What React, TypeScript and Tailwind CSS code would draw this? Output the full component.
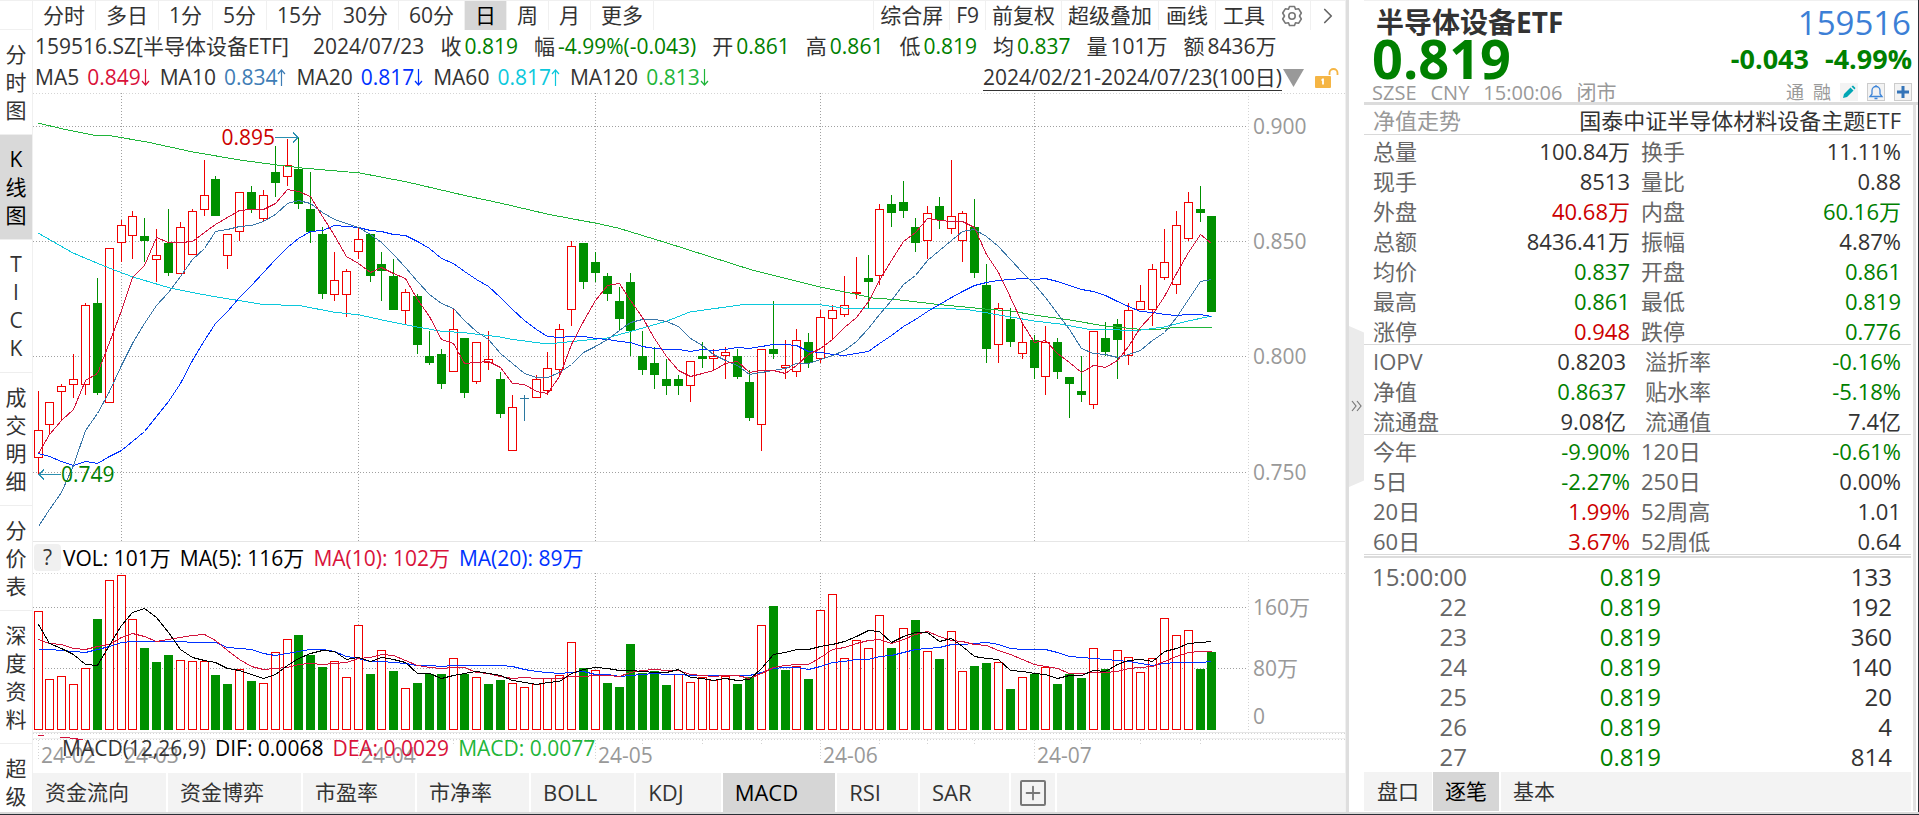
import { ChevronRight, Plus } from "lucide-react";

// one entry per day: direction, body top, body bottom, high, low (chart units)
type Candle = [string, number, number, number, number];

const CANDLES: Candle[] = [
  ["r", 430, 457, 391, 474], ["r", 402, 424, 402, 434], ["r", 386, 391, 384, 420], ["r", 379, 384, 354, 398],
  ["r", 305, 384, 303, 395], ["g", 303, 393, 278, 395], ["r", 248, 402, 248, 402], ["r", 225, 242, 220, 262],
  ["r", 216, 235, 211, 259], ["g", 236, 241, 218, 262], ["r", 255, 259, 229, 282], ["g", 243, 273, 209, 276],
  ["r", 227, 273, 222, 273], ["r", 211, 254, 209, 254], ["r", 195, 209, 160, 216], ["g", 179, 216, 176, 216],
  ["r", 234, 255, 234, 269], ["r", 192, 231, 192, 241], ["g", 192, 209, 186, 213], ["r", 195, 218, 190, 221],
  ["g", 172, 183, 146, 197], ["r", 165, 176, 139, 186], ["g", 169, 204, 137, 209], ["g", 209, 232, 172, 243],
  ["g", 234, 294, 227, 299], ["r", 280, 294, 252, 301], ["r", 271, 294, 269, 317], ["r", 239, 251, 227, 259],
  ["g", 234, 276, 234, 282], ["g", 264, 271, 252, 301], ["g", 276, 310, 259, 310], ["r", 292, 310, 289, 324],
  ["g", 296, 345, 294, 354], ["g", 356, 363, 331, 365], ["g", 354, 384, 349, 389], ["r", 329, 371, 308, 371],
  ["g", 338, 393, 338, 398], ["r", 342, 381, 342, 384], ["r", 359, 362, 331, 370], ["g", 379, 414, 372, 418],
  ["r", 407, 450, 395, 450], ["x", 398, 398, 395, 421], ["r", 379, 397, 375, 398], ["r", 368, 390, 352, 395],
  ["r", 329, 369, 324, 377], ["r", 246, 309, 241, 326], ["g", 243, 282, 243, 289], ["g", 262, 273, 252, 282],
  ["g", 276, 294, 273, 301], ["g", 301, 319, 287, 330], ["g", 282, 331, 273, 356], ["g", 356, 370, 331, 375],
  ["g", 363, 375, 347, 389], ["g", 379, 386, 359, 395], ["g", 379, 386, 375, 395], ["r", 361, 385, 361, 402],
  ["g", 356, 359, 342, 368], ["r", 356, 358, 349, 371], ["r", 352, 355, 347, 379], ["g", 356, 377, 349, 379],
  ["g", 382, 418, 370, 421], ["r", 349, 424, 349, 451], ["g", 349, 354, 301, 359], ["r", 365, 367, 340, 379],
  ["r", 340, 371, 329, 377], ["g", 342, 363, 333, 368], ["r", 317, 358, 310, 363], ["r", 310, 318, 305, 340],
  ["r", 305, 314, 276, 317], ["r", 292, 293, 257, 299], ["g", 278, 282, 255, 309], ["r", 209, 275, 204, 285],
  ["g", 204, 213, 195, 227], ["g", 202, 211, 181, 218], ["g", 227, 243, 218, 252], ["r", 213, 240, 206, 259],
  ["g", 206, 220, 197, 229], ["r", 216, 228, 160, 234], ["r", 213, 240, 211, 262], ["g", 227, 273, 199, 278],
  ["g", 285, 349, 264, 363], ["r", 308, 344, 303, 363], ["g", 319, 342, 308, 347], ["r", 342, 353, 323, 359],
  ["g", 340, 368, 335, 379], ["r", 342, 376, 326, 395], ["g", 342, 372, 338, 379], ["g", 377, 384, 377, 418],
  ["g", 391, 395, 356, 402], ["r", 331, 404, 331, 409], ["g", 338, 352, 322, 356], ["g", 324, 340, 319, 379],
  ["r", 310, 355, 303, 365], ["r", 301, 309, 285, 310], ["r", 269, 309, 264, 326], ["r", 262, 277, 229, 280],
  ["r", 225, 284, 211, 294], ["r", 202, 238, 192, 241], ["g", 209, 213, 186, 222], ["g", 216, 312, 216, 312],
];

const VOLUMES = [
  611, 679, 676, 684, 668, 619, 580, 575, 619, 648, 662, 655, 660, 661, 661, 675, 684, 669, 681, 683,
  652, 639, 635, 655, 667, 661, 677, 625, 674, 650, 671, 688, 683, 674, 674, 658, 674, 677, 684, 680,
  683, 687, 684, 678, 675, 642, 668, 670, 683, 687, 644, 673, 671, 685, 674, 682, 677, 680, 676, 684,
  677, 625, 606, 670, 666, 679, 610, 594, 658, 640, 648, 615, 648, 628, 620, 651, 659, 631, 671, 666,
  663, 662, 689, 677, 674, 667, 684, 674, 678, 648, 669, 650, 657, 672, 658, 618, 635, 630, 669, 652,
];

const VOLUME_DIRS =
  "rrrrrgrrrgggrrrggrgrrrgggrrrgrgrgggrgrgg" +
  "rrrrrrgrggggggrrrrrggrggrgrrrrrrgrgrgrrg" +
  "grgrgrgggrgrrrrrrrgg";

const MA60 =
  "38,233 73,253 109,268 133,277 170,288 200,294 217,297 260,304 302,306 333,312 360,315 382,320 417,327 440,331 467,333 500,337 510,339 547,344 567,342 607,338 643,328 667,321 690,312 740,305 757,304 815,304 850,309 875,308 941,308 970,310 1011,317 1034,321 1060,324 1087,329 1120,330 1141,330 1164,327 1188,321 1212,316";
const MA120 =
  "38,123 63,129 93,135 112,136 147,142 193,152 240,160 277,165 302,168 360,173 407,182 467,196 500,203 547,214 573,219 595,223 618,228 667,243 752,270 820,287 850,293 873,298 900,300 934,304 985,309 1011,311 1034,315 1070,320 1105,326 1137,329 1161,329 1180,327 1212,327";

const PLOT_LEFT = 33;
const PLOT_WIDTH = 1215;
const MONTHS = [
  { label: "24-02", x: 38 },
  { label: "24-03", x: 121 },
  { label: "24-04", x: 358 },
  { label: "24-05", x: 595 },
  { label: "24-06", x: 820 },
  { label: "24-07", x: 1034 },
];
const WEEKS = [4, 9, 14, 19, 24, 30, 35, 40, 51, 56, 61, 71, 75, 79, 88, 93, 98];

const xOf = (i: number) => 38 + Math.floor(11.858 * i);
const percent = (x: number) => `${((x - PLOT_LEFT) / PLOT_WIDTH) * 100}%`;

// moving average; head holds the points whose window starts before the first day
function average(values: number[], days: number, head: number[]) {
  return values
    .map((_, i) => {
      const y =
        i < head.length ? head[i] : values.slice(i - days + 1, i + 1).reduce((a, b) => a + b, 0) / days;
      return `${xOf(i) + 0.5},${Math.round(y) + 0.5}`;
    })
    .join(" ");
}

const CLOSES = CANDLES.map(([dir, top, bottom]) => (dir === "g" ? bottom : top));
const PRICE_LINES = [
  { color: "#1fb53a", points: MA120 },
  { color: "#0cc8dc", points: MA60 },
  {
    color: "#0032ff",
    points: average(CLOSES, 20, [453, 456, 461, 465, 461, 463, 456, 450, 441, 431, 416, 401, 383, 360, 340, 323, 311, 297, 285]),
  },
  { color: "#3a76a8", points: average(CLOSES, 10, [526, 509, 492, 465, 430, 413, 391, 365, 343]) },
  { color: "#d2143c", points: average(CLOSES, 5, [453, 434, 420, 409]) },
];
const VOLUME_LINES = [
  {
    color: "#0032ff",
    points: average(VOLUMES, 20, [649, 649, 650, 651, 652, 649, 646, 642, 641, 641, 641, 641, 641, 642, 642, 642, 647, 648, 649]),
  },
  { color: "#d2143c", points: average(VOLUMES, 10, [639, 643, 644, 648, 649, 646, 644, 637, 633]) },
  { color: "#000000", points: average(VOLUMES, 5, [624, 643, 648, 654]) },
];

function Line({ color, points }: { color: string; points: string }) {
  return <polyline points={points} fill="none" stroke={color} strokeWidth="1" />;
}

function Bar({ x, top, bottom, dir }: { x: number; top: number; bottom: number; dir: string }) {
  if (dir === "x") return <path d={`M${x - 4} ${top + 0.5}h9`} stroke="#2b78a0" />;
  if (dir === "g") return <rect x={x - 4} y={top} width="9" height={Math.max(bottom - top, 2)} fill="#009000" />;
  return (
    <rect x={x - 3.5} y={top + 0.5} width="8" height={Math.max(bottom - top, 1)} fill="#fff" stroke="#f00000" />
  );
}

function PriceChart() {
  return (
    <div className="flex h-[448px]">
      <div className="relative flex-1 min-w-0">
        <svg
          viewBox="33 93 1215 448"
          preserveAspectRatio="none"
          shapeRendering="crispEdges"
          className="block w-full h-full"
        >
          <path d="M33 93.5H1248" stroke="#d4d4d4" strokeDasharray="1 2" />
          {[126, 241, 356, 472].map((y) => (
            <path key={y} d={`M33 ${y + 0.5}H1248`} stroke="#a0a0a0" strokeDasharray="1 2" />
          ))}
          {MONTHS.slice(1).map((m) => (
            <path key={m.label} d={`M${m.x + 0.5} 93V541`} stroke="#a0a0a0" strokeDasharray="1 2" />
          ))}
          {CANDLES.map(([dir, top, bottom, high, low], i) => (
            <g key={i}>
              <path
                d={`M${xOf(i) + 0.5} ${high}V${low}`}
                stroke={dir === "g" ? "#009000" : dir === "r" ? "#f00000" : "#2b78a0"}
              />
              <Bar x={xOf(i)} top={top} bottom={bottom} dir={dir} />
            </g>
          ))}
          {PRICE_LINES.map((line) => (
            <Line key={line.color} {...line} />
          ))}
          <g fill="none" stroke="#2b8fb0">
            <path d="M275 137.5H298M293 132.5l5 5-5 5" />
            <path d="M61 474.5H39M44 469.5l-5 5 5 5" />
          </g>
        </svg>
        <span className="absolute top-[29px] leading-[30px] -translate-x-full text-[#cc0000]" style={{ left: percent(275) }}>
          0.895
        </span>
        <span className="absolute top-[366px] leading-[30px] text-[#008000]" style={{ left: percent(61) }}>
          0.749
        </span>
      </div>
      <svg width="97" height="448" viewBox="1248 93 97 448" className="shrink-0 text-[21px]">
        <path d="M1248 93.5H1345M1248.5 93V541" stroke="#d4d4d4" strokeDasharray="1 2" />
        <g fill="#999">
          <text x="1253" y="134">0.900</text>
          <text x="1253" y="249">0.850</text>
          <text x="1253" y="364">0.800</text>
          <text x="1253" y="480">0.750</text>
        </g>
      </svg>
    </div>
  );
}

function VolumeChart() {
  return (
    <div className="flex h-[160px]">
      <svg
        viewBox="33 573 1215 160"
        preserveAspectRatio="none"
        shapeRendering="crispEdges"
        className="block flex-1 min-w-0 h-full"
      >
        <path d="M33 573.5H1248" stroke="#d4d4d4" strokeDasharray="1 2" />
        <path d="M33 607.5H1248M33 668.5H1248" stroke="#a0a0a0" strokeDasharray="1 2" />
        {MONTHS.slice(1).map((m) => (
          <path key={m.label} d={`M${m.x + 0.5} 573V730`} stroke="#a0a0a0" strokeDasharray="1 2" />
        ))}
        {VOLUMES.map((top, i) => (
          <Bar key={i} x={xOf(i)} top={top} bottom={VOLUME_DIRS[i] === "g" ? 730 : 729} dir={VOLUME_DIRS[i]} />
        ))}
        {VOLUME_LINES.map((line) => (
          <Line key={line.color} {...line} />
        ))}
        <path d="M33 732.5H1248" stroke="#e6e6e6" />
      </svg>
      <svg width="97" height="160" viewBox="1248 573 97 160" className="shrink-0 text-[21px]">
        <path d="M1248 573.5H1345M1248.5 573V733" stroke="#d4d4d4" strokeDasharray="1 2" />
        <path d="M1248 732.5H1345" stroke="#e6e6e6" />
        <g fill="#999">
          <text x="1253" y="615">160万</text>
          <text x="1253" y="676">80万</text>
          <text x="1253" y="724">0</text>
        </g>
      </svg>
    </div>
  );
}

function DateAxis() {
  return (
    <div className="relative h-[40px] overflow-hidden">
      <div className="relative h-full mr-[97px]">
        <svg
          viewBox="33 733 1215 40"
          preserveAspectRatio="none"
          shapeRendering="crispEdges"
          className="block w-full h-full overflow-visible"
        >
          <path d="M33 733.5H1345M33 739.5H1345" stroke="#d4d4d4" strokeDasharray="1 2" />
          <path d="M33 738.5H1345" stroke="#f0f0f0" />
          <path d="M38 735.5h6M60 737.5h10M70 738.5h8M76 739.5h7" stroke="#d2143c" />
          {MONTHS.map((m) => (
            <path key={m.label} d={`M${m.x + 0.5} 740V759`} stroke="#d4d4d4" strokeDasharray="1 2" />
          ))}
          {WEEKS.map((i) => (
            <path key={i} d={`M${xOf(i) + 0.5} 740V745`} stroke="#d4d4d4" strokeDasharray="1 2" />
          ))}
        </svg>
        {MONTHS.map((m) => (
          <span key={m.label} className="absolute top-[7px] pl-[3px] leading-[30px] text-[#999]" style={{ left: percent(m.x) }}>
            {m.label}
          </span>
        ))}
      </div>
      <div className="absolute left-[29px] top-0 flex gap-[9px] leading-[30px] text-[#333]">
        <span>MACD(12,26,9)</span>
        <span className="text-black">DIF: 0.0068</span>
        <span className="text-[#d9123a]">DEA: 0.0029</span>
        <span className="text-[#1fb53a]">MACD: 0.0077</span>
      </div>
    </div>
  );
}

const SIDE_TABS = ["分时图", "K线图", "TICK", "成交明细", "分价表", "深度资料", "超级"];
const PERIODS = ["分时", "多日", "1分", "5分", "15分", "30分", "60分", "日", "周", "月", "更多"];
const INDICATORS = ["资金流向", "资金博弈", "市盈率", "市净率", "BOLL", "KDJ", "MACD", "RSI", "SAR"];

function SideTabs() {
  return (
    <nav className="w-[33px] shrink-0 border-r border-[#f0f0f0] h-[812px] overflow-hidden">
      <div className="h-[30px] border-y border-[#f0f0f0]" />
      {SIDE_TABS.map((tab) => (
        <button
          key={tab}
          className={
            "flex flex-col items-center w-full py-[10px] leading-[28px] border-b border-[#eee] " +
            (tab === "K线图" ? "bg-[#d9d9d9] text-black" : "")
          }
        >
          {tab.split("").map((char, i) => (
            <span key={i}>{char}</span>
          ))}
        </button>
      ))}
    </nav>
  );
}

function GearIcon() {
  return (
    <svg width="22" height="22" viewBox="0 0 22 22" fill="none" stroke="#777" strokeWidth="1.6" strokeLinejoin="round">
      <path d="M8.500 1.500h5l1 2.800 3.200-.5 2.600 4.200-1.800 3 1.800 3-2.600 4.200-3.200-.5-1 2.800h-5l-1-2.800-3.200.5-2.600-4.200 1.800-3-1.800-3 2.600-4.200 3.200.5z" />
      <circle cx="11" cy="11" r="3.200" />
    </svg>
  );
}

function TopBar() {
  return (
    <div className="flex h-[30px] border-t border-[#f0f0f0] leading-[29px]">
      {PERIODS.map((period) => (
        <button
          key={period}
          className={
            "px-[10px] border-r border-[#f0f0f0] " + (period === "日" ? "bg-[#d6d6d6] text-black" : "")
          }
        >
          {period}
        </button>
      ))}
      <div className="flex ml-auto border-l border-[#f0f0f0]">
        {["综合屏", "F9", "前复权", "超级叠加"].map((item) => (
          <button key={item} className="px-[6px] border-r border-[#f0f0f0]">
            {item}
          </button>
        ))}
        {["画线", "工具"].map((item) => (
          <button key={item} className="px-[7px] border-r border-[#f0f0f0]">
            {item}
          </button>
        ))}
        <button aria-label="设置" className="flex items-center justify-center w-[38px] border-r border-[#f0f0f0]">
          <GearIcon />
        </button>
        <button aria-label="展开" className="flex items-center justify-center w-[34px]">
          <ChevronRight size={26} color="#666" strokeWidth={1.6} />
        </button>
      </div>
    </div>
  );
}

const QUOTE = [
  { label: "收", value: "0.819", color: "text-[#008000]" },
  { label: "幅", value: "-4.99%(-0.043)", color: "text-[#008000]" },
  { label: "开", value: "0.861", color: "text-[#008000]" },
  { label: "高", value: "0.861", color: "text-[#008000]" },
  { label: "低", value: "0.819", color: "text-[#008000]" },
  { label: "均", value: "0.837", color: "text-[#008000]" },
  { label: "量", value: "101万", color: "" },
  { label: "额", value: "8436万", color: "" },
];

const AVERAGES = [
  { label: "MA5", value: "0.849", up: false, color: "text-[#d9123a]" },
  { label: "MA10", value: "0.834", up: true, color: "text-[#3f7db5]" },
  { label: "MA20", value: "0.817", up: false, color: "text-[#0032ff]" },
  { label: "MA60", value: "0.817", up: true, color: "text-[#0cc8dc]" },
  { label: "MA120", value: "0.813", up: false, color: "text-[#1fb53a]" },
];

function Arrow({ up }: { up: boolean }) {
  return (
    <svg width="9" height="17" viewBox="0 0 9 17" fill="none" stroke="currentColor" strokeWidth="1.2">
      {up ? <path d="M4.500 17V1M1 5l3.500-4L8 5" /> : <path d="M4.500 0v16M1 12l3.500 4L8 12" />}
    </svg>
  );
}

function QuoteRows() {
  return (
    <div className="pl-[2px]">
      <div className="flex gap-4 h-8 leading-8 whitespace-nowrap">
        <span className="mr-2">159516.SZ[半导体设备ETF]</span>
        <span>2024/07/23</span>
        {QUOTE.map((item) => (
          <span key={item.label} className="flex gap-[3px]">
            {item.label}
            <span className={item.color}>{item.value}</span>
          </span>
        ))}
      </div>
      <div className="flex items-center gap-[10px] h-[31px] leading-[33px] whitespace-nowrap">
        {AVERAGES.map((item) => (
          <span key={item.label} className="flex items-center gap-2">
            {item.label}
            <span className={"flex items-center " + item.color}>
              {item.value}
              <Arrow up={item.up} />
            </span>
          </span>
        ))}
        <a href="#range" className="ml-auto leading-[25px] border-b border-[#333]">
          2024/02/21-2024/07/23(100日)
        </a>
        <svg width="58" height="22" viewBox="0 0 58 22" className="-ml-[9px] mr-[4px]">
          <path d="M0 2h21L10.500 20z" fill="#999" />
          <rect x="32" y="9" width="16" height="12" rx="1" fill="#f5b544" />
          <path d="M46.500 8V6a4 4 0 0 1 8 0v2" fill="none" stroke="#f5b544" strokeWidth="1.800" />
          <path d="M40 11.500v6M38.500 13h2" stroke="#fff" strokeWidth="1.800" />
        </svg>
      </div>
    </div>
  );
}

function IndicatorTabs() {
  return (
    <div className="flex h-[39px] bg-[#f3f3f3] leading-[39px]">
      {INDICATORS.map((name) => (
        <button
          key={name}
          className={
            "pl-3 pr-[37px] border-r-2 border-white text-left " +
            (/^[A-Z]/.test(name) ? "text-[22px] " : "") +
            (name === "MACD" ? "bg-[#d6d6d6] text-black" : "")
          }
        >
          {name}
        </button>
      ))}
      <button aria-label="添加指标" className="flex items-center px-[9px] border-r-2 border-white">
        <span className="flex items-center justify-center w-[26px] h-[26px] border-2 border-[#777] rounded-xs">
          <Plus size={22} color="#777" strokeWidth={2} />
        </span>
      </button>
    </div>
  );
}

function Splitter() {
  return (
    <div className="flex items-center w-[18px] shrink-0">
      <div className="w-[3px] self-stretch bg-[#dedede]" />
      <button aria-label="收起">
        <svg width="15" height="161" viewBox="0 0 15 161">
          <path d="M0 0l15 6.500v148L0 161z" fill="#ebebeb" />
          <path d="M3 75l4 5-4 5M8 75l4 5-4 5" fill="none" stroke="#777" strokeWidth="1.200" />
        </svg>
      </button>
    </div>
  );
}

const RED = "text-[#cc0000]";
const GREEN = "text-[#008000]";
const STATS = [
  [
    ["总量", "100.84万", "", "换手", "11.11%", ""],
    ["现手", "8513", "", "量比", "0.88", ""],
    ["外盘", "40.68万", RED, "内盘", "60.16万", GREEN],
    ["总额", "8436.41万", "", "振幅", "4.87%", ""],
    ["均价", "0.837", GREEN, "开盘", "0.861", GREEN],
    ["最高", "0.861", GREEN, "最低", "0.819", GREEN],
    ["涨停", "0.948", RED, "跌停", "0.776", GREEN],
  ],
  [
    ["IOPV", "0.8203", "", "溢折率", "-0.16%", GREEN],
    ["净值", "0.8637", GREEN, "贴水率", "-5.18%", GREEN],
    ["流通盘", "9.08亿", "", "流通值", "7.4亿", ""],
  ],
  [
    ["今年", "-9.90%", GREEN, "120日", "-0.61%", GREEN],
    ["5日", "-2.27%", GREEN, "250日", "0.00%", ""],
    ["20日", "1.99%", RED, "52周高", "1.01", ""],
    ["60日", "3.67%", RED, "52周低", "0.64", ""],
  ],
];

const TICKS = [
  ["15:00:00", "133"],
  ["22", "192"],
  ["23", "360"],
  ["24", "140"],
  ["25", "20"],
  ["26", "4"],
  ["27", "814"],
];

function StatTable({ rows, inset }: { rows: string[][]; inset: boolean }) {
  return (
    <div className="border-b border-[#d9d9d9]">
      <table className="w-full table-fixed -mb-px text-[22px] leading-[28px]">
        <colgroup>
          <col className="w-[110px]" />
          <col className="w-[156px]" />
          <col className="w-[113px]" />
          <col />
        </colgroup>
        <tbody>
          {rows.map(([label1, value1, color1, label2, value2, color2]) => (
            <tr key={label1}>
              <th className="p-0 pt-[2px] pl-[9px] text-left font-normal text-[#666]">{label1}</th>
              <td className={"p-0 pt-[2px] text-right " + (inset ? "pr-1 " : "") + color1}>{value1}</td>
              <th className={"p-0 pt-[2px] text-left font-normal text-[#666] " + (inset ? "pl-[15px]" : "pl-[11px]")}>
                {label2}
              </th>
              <td className={"p-0 pt-[2px] pr-[10px] text-right " + color2}>{value2}</td>
            </tr>
          ))}
        </tbody>
      </table>
    </div>
  );
}

function QuotePanel() {
  return (
    <aside className="w-[555px] shrink-0 border-r border-[#2b2f36]">
      <header className="border-t border-[#f0f0f0]">
        <div className="flex justify-between h-[37px] pt-1 pl-[12px] pr-[7px] leading-[35px]">
          <h1 className="text-[28px] font-bold">半导体设备ETF</h1>
          <span className="text-[33px] text-[#3c7fd6]">159516</span>
        </div>
        <div className="flex justify-between h-[43px] pl-[8px] pr-[6px] leading-[41px] font-bold text-[#008000]">
          <span className="text-[54px]">0.819</span>
          <span className="flex gap-4 text-[27px]">
            <span>-0.043</span>
            <span>-4.99%</span>
          </span>
        </div>
        <div className="flex items-center h-[21px] pl-[8px] pr-[6px] text-[20px] leading-[24px] text-[#999]">
          <span className="flex gap-[14px] pt-[3px]">
            <span>SZSE</span>
            <span>CNY</span>
            <span>15:00:06</span>
            <span>闭市</span>
          </span>
          <span className="flex items-center gap-[9px] ml-auto text-[18px] leading-[20px]">
            <span>通</span>
            <span>融</span>
            <button aria-label="编辑" className="bg-[#f3f3f3]">
              <svg width="18" height="18" viewBox="0 0 18 18" fill="#00a6b4">
                <path d="M3 15l1-4 6.500-6.500 3 3L7 14zM11.500 3.500L13 2.500l2.500 2.500-1 1.500z" />
              </svg>
            </button>
            <button aria-label="提醒" className="bg-[#f3f3f3] border border-[#ccc]">
              <svg width="16" height="16" viewBox="0 0 16 16" fill="none" stroke="#3f86d8" strokeWidth="1.300">
                <path d="M2 12.500h12l-2-2.500V6.500a4 4 0 0 0-8 0V10zM8 1v1.500M6.500 14.500h3" />
              </svg>
            </button>
            <button aria-label="添加" className="bg-[#f3f3f3] border border-[#ccc]">
              <svg width="16" height="16" viewBox="0 0 16 16" stroke="#3574b8" strokeWidth="3">
                <path d="M8 2v12M2 8h12" />
              </svg>
            </button>
          </span>
        </div>
      </header>
      <div className="flex border-t-[3px] border-[#dcdcdc]">
        <div className="flex-1">
          <div className="flex justify-between h-[30px] pl-[9px] pr-[10px] text-[22px] leading-[31px] border-b border-[#d9d9d9]">
            <a href="#nav" className="text-[#999]">
              净值走势
            </a>
            <span>国泰中证半导体材料设备主题ETF</span>
          </div>
          {STATS.map((rows, i) => (
            <StatTable key={i} rows={rows} inset={i === 1} />
          ))}
          <div className="mt-px pt-1 border-t-2 border-[#dcdcdc]">
            <table className="w-full table-fixed text-[24px] leading-[30px]">
              <tbody>
                {TICKS.map(([time, amount]) => (
                  <tr key={time}>
                    <td className="w-[103px] p-0 text-right text-[#666]">{time}</td>
                    <td className="w-[194px] p-0 text-right text-[#008000]">0.819</td>
                    <td className="p-0 pr-[19px] text-right">{amount}</td>
                  </tr>
                ))}
              </tbody>
            </table>
          </div>
          <div className="flex h-[39px] bg-[#f3f3f3] leading-[39px]">
            <button className="px-[13px] border-r border-white">盘口</button>
            <button className="px-3 bg-[#d6d6d6] border-r-2 border-white text-black">逐笔</button>
            <button className="px-3">基本</button>
          </div>
        </div>
        <div className="w-[3px] mx-[2px] bg-[#e2e2e2]" />
      </div>
    </aside>
  );
}

export default function App() {
  return (
    <div className="bg-white text-[21px] text-[#333] font-['Open_Sans','Noto_Sans_CJK_SC',sans-serif] overflow-hidden">
      <div className="flex">
        <SideTabs />
        <main className="flex-1 min-w-0 border-r border-[#f0f0f0]">
          <TopBar />
          <QuoteRows />
          <PriceChart />
          <div className="flex items-center gap-[9px] h-8 border-t border-[#e6e6e6] leading-[30px]">
            <button className="w-[27px] h-[27px] ml-px -mr-[7px] rounded bg-[#f0f0f0] leading-[27px]">?</button>
            <span className="text-black">VOL: 101万</span>
            <span className="text-black">MA(5): 116万</span>
            <span className="text-[#d9123a]">MA(10): 102万</span>
            <span className="text-[#0032ff]">MA(20): 89万</span>
          </div>
          <VolumeChart />
          <DateAxis />
          <IndicatorTabs />
        </main>
        <Splitter />
        <QuotePanel />
      </div>
      <div className="h-[3px] border-t-2 border-t-[#d9d9d9] bg-[#2b2f36]" />
    </div>
  );
}
